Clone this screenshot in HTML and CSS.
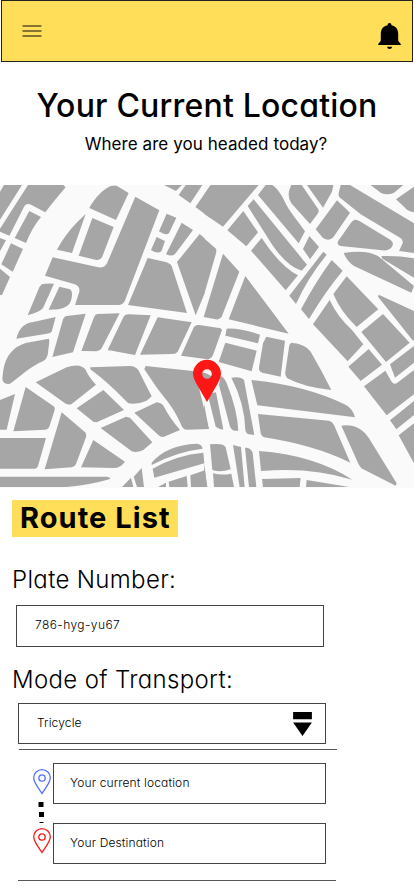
FILE: index.html
```html
<!DOCTYPE html>
<html lang="en">
<head>
<meta charset="utf-8">
<meta name="viewport" content="width=device-width, initial-scale=1">
<title>Your Current Location</title>
<link rel="stylesheet" href="styles.css">
</head>
<body>
<header class="topbar">
  <svg class="menu" viewBox="0 0 20 12"><path d="M.5 1h19M.5 6h19M.5 11h19"/></svg>
  <svg class="bell" viewBox="0 0 23 26"><path d="M11.5 0q2 0 2 2.2c4.700 1 6.700 4.200 6.700 8.800v6.500c0 1.600 2.800 2.500 2.800 4.500H0c0-2 2.800-2.900 2.800-4.500V11c0-4.600 2-7.800 6.700-8.800Q9.500 0 11.500 0zM9 23.700h5.200q-.4 2.300-2.600 2.300T9 23.700z"/></svg>
</header>
<main>
  <section class="intro">
    <h1>Your Current Location</h1>
    <p>Where are you headed today?</p>
  </section>
  <svg class="map" viewBox="0 185 414 303">
    <g transform="translate(0 180) scale(.33333)">
      <path d="M12 15H66L0 119V35ZM84 15H190L197 22Q160 65 136 97L90 73Q78 70 73 79L28 167 0 155V146ZM88 93L123 111Q95 145 78 189L44 174ZM0 174L18 181 0 214ZM33 190L69 207 38 275 4 253ZM0 266L30 291 6 345H0Z"/>
      <path d="M268 84C290 45 330 5 355 20L386 39 348 120ZM257 102C210 145 190 175 171 209L216 219ZM277 114L341 141 306 232Q300 242 286 239L236 227Z"/>
      <path d="M406 50L478 91 374 364Q368 375 355 375H225L238 335Q241 318 222 312L135 287 158 232 295 262Q314 265 321 250ZM125 313Q135 310 162 311L129 384Q120 396 83 406L118 322ZM178 320L210 328Q217 332 216 345C214 375 200 390 146 389Z"/>
      <path d="M500 101L529 113 507 160Q498 168 477 154ZM470 171L495 183 485 212Q475 224 453 210ZM545 128L579 150 527 220Q518 232 498 223ZM443 234L497 246Q511 250 515 258L561 399 384 375ZM599 162L613 174V342L587 406 531 246ZM492 15H546L528 33ZM557 15H607L571 70 536 45ZM630 18L586 81 630 113Z"/>
      <path d="M49 476Q60 430 100 426L167 411 155 455Q152 459 140 461ZM200 408L257 401 219 517 157 531 187 425Q190 410 200 408ZM292 402L359 400 305 505Q300 513 290 514L244 513 282 412Q285 403 292 402ZM385 403L452 406 405 525 323 510 370 412Q374 403 385 403ZM473 412L575 427 533 515Q528 522 518 522L420 524ZM598 435L662 445 666 450 639 525Q634 537 622 538L543 527 580 445Q584 434 598 435Z"/>
    </g>
    <g transform="translate(204 180) scale(.33333)">
      <path d="M0 44L20 15H164L57 140 0 101ZM118 93L162 157 127 199 70 151ZM173 174Q230 260 282 286L245 331 141 212ZM149 58L309 254 293 272Q250 260 205 195L131 78ZM185 15H205Q222 25 240 60C255 95 280 120 303 154L284 190 162 45ZM262 15H293L343 88Q346 95 340 103L318 132 262 70Q250 50 256 30ZM309 15H388L384 35 357 83Z"/>
      <path d="M399 61L438 98 388 172Q375 185 357 174L335 148ZM316 168L345 201 318 238 297 207ZM358 215L368 224Q310 295 276 372L256 347ZM383 240L416 272Q360 340 315 417L291 388Q335 305 383 240Z"/>
      <path d="M410 15H438L630 130V219L585 213 596 190Q598 178 588 173L470 103 410 55Q402 50 404 40ZM500 15H598L570 38Q550 47 530 38ZM630 20L576 58 610 90Q620 96 630 97ZM455 119L465 122 560 180Q572 190 563 202Q555 213 535 211L410 198Q398 195 402 184L440 130Q448 118 455 119ZM419 219Q490 208 525 230L630 318 622 338 450 258Q430 245 419 219ZM532 228Q580 226 630 235V293L535 236Z"/>
      <path d="M428 289L523 388 458 441Q410 395 388 342ZM377 360Q400 410 444 450L478 493 431 544 327 433ZM524 344L630 393V480L627 482 522 350ZM537 402L617 488 546 546 472 456ZM124 288L254 461 74 418ZM0 175L36 206Q38 212 36 220L0 345ZM57 221L106 275 53 410Q45 420 35 418L-1 411Z"/>
    </g>
    <g transform="translate(0 330) scale(.33333)">
      <path d="M147 26L80 38Q20 55 10 120L7 145Q8 165 30 161C60 140 90 110 130 93Q140 87 143 75L148 35ZM107 157L200 112Q240 98 256 118Q265 140 288 164L215 222Q205 226 195 220ZM271 112L390 108Q405 108 415 120L455 199 440 212Q410 225 385 220C350 185 320 155 271 118ZM437 108L585 124 627 297 560 299Q550 298 546 290C520 225 480 190 465 165L433 118Z"/>
      <path d="M310 180L372 240 290 277 280 275 230 235ZM470 217Q485 218 492 230Q510 265 540 300L490 321Q480 321 475 315L403 248ZM378 260L390 263 457 337 430 360Q410 370 395 364L302 294ZM77 171L163 230Q165 235 164 240L148 290Q144 298 136 299L40 304ZM0 210L45 192 20 299H0ZM0 324H138L114 408Q112 416 104 416H0Z"/>
      <path d="M185 247L257 308Q260 315 258 322L228 402Q224 411 215 412L134 418ZM280 330L375 395Q360 415 340 414L243 412ZM0 440H320Q335 442 328 448Q270 465 200 471H0ZM393 443L400 471H366ZM401 440L425 414 432 471H411ZM455 398Q500 345 590 341Q606 342 608 356Q530 365 455 405ZM458 416Q530 375 610 368L613 400 463 443ZM474 471L498 458V471ZM506 455L560 438 563 471H508ZM571 436L615 421 621 471H573Z"/>
    </g>
    <g transform="translate(204 330) scale(.33333)">
      <path d="M68-4Q110-6 168 14L162 40 64 17ZM64 38L158 62 143 124 44 96ZM187 20L243 32 230 140 175 128Q164 125 165 112L177 40ZM262 38Q305 42 320 65Q355 125 382 180Q300 172 250 145Q242 138 244 125L256 45ZM494 57L534 104 470 153 433 110ZM544 122L563 155Q570 165 580 158L630 120V193L548 256 480 169ZM558 103L630 48V98L573 143ZM630 213V255L577 298 558 271ZM584 316L630 280V400Z"/>
      <path d="M-20 127Q5 125 24 140V155H-20ZM50 138Q62 142 70 165Q100 240 103 302Q85 305 78 290L45 165ZM20 190L36 187 58 298Q50 300 35 290L14 205ZM0 220L14 296H0ZM82 143Q110 138 120 150L151 315 135 313Q125 310 124 300Q122 220 82 143ZM142 150Q300 165 420 222Q445 232 453 262L160 226ZM162 252L375 272Q385 275 390 285L439 398Q330 345 180 322Q172 318 170 310Z"/>
      <path d="M165 363Q330 375 445 449Q320 410 171 423ZM174 447L290 444 287 471H177ZM308 450Q370 460 435 471H306ZM412 287Q465 280 495 325L578 460 575 467 472 415 465 405ZM18 343Q60 338 65 352L80 418Q50 428 25 420ZM27 430Q55 437 82 431L90 471H30ZM0 400L10 471H0ZM87 345L111 351 122 471H107ZM123 353Q140 352 146 368L157 471H135Z"/>
    </g>
    <path class="marker" fill-rule="evenodd" d="M207 402L196 383Q193 378 193 374a14 14.200 0 0 1 28 0Q221 378 218 383ZM207 369.200a4.800 4.800 0 1 0 0 9.600a4.800 4.800 0 1 0 0-9.600Z"/>
  </svg>
  <h2><span>Route List</span></h2>
  <section class="form">
    <div class="label plate-label">Plate Number:</div>
    <div class="field plate">786-hyg-yu67</div>
    <div class="label mode-label">Mode of Transport:</div>
    <div class="field mode"><span>Tricycle</span>
      <svg viewBox="0 0 18 23"><path d="M0 0h18v7H0zM0 10h18L9 23z"/></svg>
    </div>
    <div class="route">
      <svg class="stops" viewBox="0 0 18 85">
        <g class="from"><path d="M9 24.500C6 19.500.7 14 .7 8.800a8.300 8.100 0 0 1 16.600 0C17.300 14 12 19.500 9 24.500z"/><circle cx="9" cy="9" r="3.200"/></g>
        <path d="M5.500 33h5v5h-5zM6 43h5v5H6zM6.500 53h4v1h-4z"/>
        <g class="to" transform="translate(0 59)"><path d="M9 24.500C6 19.500.7 14 .7 8.800a8.300 8.100 0 0 1 16.600 0C17.300 14 12 19.500 9 24.500z"/><circle cx="9" cy="9" r="3.200"/></g>
      </svg>
      <div class="places">
        <div class="field">Your current location</div>
        <div class="field">Your Destination</div>
      </div>
    </div>
    <hr>
  </section>
</main>
</body>
</html>
```
FILE: styles.css
```css
* { box-sizing: border-box; }
body { margin: 0; background: #fff; color: #000; font-family: Inter, sans-serif; font-feature-settings: "cv11"; height: 896px; overflow: hidden; }
svg { display: block; flex: none; }
.topbar { display: flex; justify-content: space-between; margin: 0 1px; height: 62px; padding: 23px 11px 0 20px; background: #ffde59; border: 1px solid #222; }
.menu { width: 20px; height: 12px; margin-top: 1px; stroke: #867430; stroke-width: 1.8; fill: none; }
.bell { width: 23px; height: 26px; margin-top: -1px; }
.intro { height: 123px; padding-top: 23px; text-align: center; white-space: nowrap; }
h1 { margin: 0; font-size: 32px; line-height: 42px; font-weight: 500; letter-spacing: .2px; }
.intro p { margin: 5px 2px 0 0; font-size: 17px; line-height: 24px; letter-spacing: .07px; font-feature-settings: normal; }
.map { width: 414px; height: 303px; background: #fafafa; fill: #a6a6a6; }
.marker { fill: #ff1616; }
h2 { margin: 12px 0 0 12px; width: 166px; height: 37px; padding-left: 8px; background: #ffde59; font-size: 29px; line-height: 36px; font-weight: 700; letter-spacing: 1.05px; white-space: nowrap; }
.label { margin-left: 12px; height: 36px; font-size: 24px; line-height: 36px; font-weight: 300; letter-spacing: .34px; white-space: nowrap; }
.plate-label { margin-top: 25px; }
.mode-label { margin-top: 15px; }
.field { height: 41px; border: 1px solid #444; padding-left: 18px; font-size: 12px; line-height: 37px; font-weight: 300; letter-spacing: .14px; white-space: nowrap; }
.plate { width: 308px; height: 42px; margin: 7px 0 0 16px; letter-spacing: .42px; }
.mode { display: flex; justify-content: space-between; width: 308px; margin: 5px 0 0 18px; padding-right: 13px; }
.mode .field span { letter-spacing: 0; }
.mode svg { width: 19px; height: 24px; margin-top: 8px; }
.route { display: flex; width: 318px; height: 131px; margin: 5px 0 0 19px; padding: 13px 0 0 14px; border-top: 1px solid #555; gap: 2px; }
.stops { width: 18px; height: 85px; margin-top: 6px; }
.from, .to { fill: none; stroke: #5271ff; stroke-width: 1.3; }
.to { stroke: #ff1616; }
.places { display: grid; align-content: start; gap: 19px; width: 273px; }
.places .field { padding-left: 16px; }
hr { width: 318px; height: 1px; margin: 0 0 0 18px; border: 0; background: #555; }
```
